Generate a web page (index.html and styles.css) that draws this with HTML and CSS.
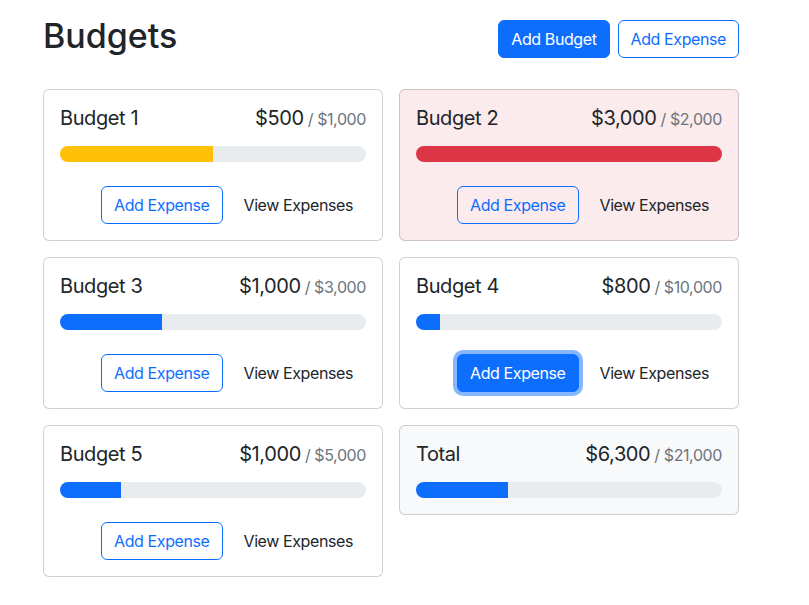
FILE: index.html
```html
<!DOCTYPE html>
<html lang="en">
<head>
<meta charset="utf-8">
<title>Budgets</title>
<link rel="stylesheet" href="styles.css">
</head>
<body>
<div class="page">
  <header class="header">
    <h1 class="title">Budgets</h1>
    <div class="actions">
      <button class="btn btn-primary">Add Budget</button>
      <button class="btn btn-outline">Add Expense</button>
    </div>
  </header>

  <div class="grid">
    <div class="card">
      <div class="card-head">
        <span class="name">Budget 1</span>
        <span class="amount">$500<span class="max">/ $1,000</span></span>
      </div>
      <div class="progress"><div class="bar bar-warning" style="width:50%"></div></div>
      <div class="card-actions">
        <button class="btn btn-outline">Add Expense</button>
        <button class="btn btn-plain">View Expenses</button>
      </div>
    </div>

    <div class="card card-danger">
      <div class="card-head">
        <span class="name">Budget 2</span>
        <span class="amount">$3,000<span class="max">/ $2,000</span></span>
      </div>
      <div class="progress"><div class="bar bar-danger" style="width:100%"></div></div>
      <div class="card-actions">
        <button class="btn btn-outline">Add Expense</button>
        <button class="btn btn-plain">View Expenses</button>
      </div>
    </div>

    <div class="card">
      <div class="card-head">
        <span class="name">Budget 3</span>
        <span class="amount">$1,000<span class="max">/ $3,000</span></span>
      </div>
      <div class="progress"><div class="bar" style="width:33.33%"></div></div>
      <div class="card-actions">
        <button class="btn btn-outline">Add Expense</button>
        <button class="btn btn-plain">View Expenses</button>
      </div>
    </div>

    <div class="card">
      <div class="card-head">
        <span class="name">Budget 4</span>
        <span class="amount">$800<span class="max">/ $10,000</span></span>
      </div>
      <div class="progress"><div class="bar" style="width:8%"></div></div>
      <div class="card-actions">
        <button class="btn btn-outline is-focused">Add Expense</button>
        <button class="btn btn-plain">View Expenses</button>
      </div>
    </div>

    <div class="card">
      <div class="card-head">
        <span class="name">Budget 5</span>
        <span class="amount">$1,000<span class="max">/ $5,000</span></span>
      </div>
      <div class="progress"><div class="bar" style="width:20%"></div></div>
      <div class="card-actions">
        <button class="btn btn-outline">Add Expense</button>
        <button class="btn btn-plain">View Expenses</button>
      </div>
    </div>

    <div class="card card-light">
      <div class="card-head">
        <span class="name">Total</span>
        <span class="amount">$6,300<span class="max">/ $21,000</span></span>
      </div>
      <div class="progress"><div class="bar" style="width:30%"></div></div>
    </div>
  </div>
</div>
</body>
</html>
```

FILE: styles.css
```css
* { box-sizing: border-box; }

body {
  margin: 0;
  background: #fff;
  color: #212529;
  font-family: Inter, "Noto Sans", "Liberation Sans", sans-serif;
  font-size: 16px;
  line-height: 1.5;
  letter-spacing: -0.025em;
}

.page {
  width: 696px;
  margin-left: 43px;
  padding-top: 16px;
}

.header {
  display: flex;
  justify-content: space-between;
  align-items: center;
  margin-bottom: 24px;
}

.title {
  margin: 0 0 8px;
  font-size: 34px;
  font-weight: 500;
  line-height: 1.2;
  letter-spacing: 0;
}

.actions {
  display: flex;
  gap: 8px;
  margin-top: -2px;
}

.btn {
  font-family: inherit;
  font-size: 16px;
  line-height: 24px;
  letter-spacing: inherit;
  padding: 6px 12px;
  border: 1px solid transparent;
  border-radius: 6px;
  background: transparent;
  color: #212529;
  cursor: pointer;
}

.btn-primary {
  background: #0d6efd;
  border-color: #0d6efd;
  color: #fff;
}

.btn-outline {
  border-color: #0d6efd;
  color: #0d6efd;
}

.btn-outline.is-focused {
  background: #0d6efd;
  color: #fff;
  box-shadow: 0 0 0 4px rgba(13, 110, 253, 0.5);
}

.grid {
  display: grid;
  grid-template-columns: 1fr 1fr;
  gap: 16px;
  align-items: start;
}

.card {
  border: 1px solid rgba(0, 0, 0, 0.175);
  border-radius: 6px;
  padding: 16px;
  background: #fff;
}

.card-danger { background: #fbebec; }
.card-light { background: #f8f9fa; }

.card-head {
  display: flex;
  justify-content: space-between;
  align-items: baseline;
  margin-bottom: 16px;
  height: 24px;
  line-height: 24px;
}

.name {
  font-size: 20px;
  font-weight: 400;
}

.amount {
  font-size: 20px;
}

.max {
  font-size: 16px;
  color: #6c757d;
  margin-left: 4px;
}

.progress {
  height: 16px;
  border-radius: 8px;
  background: #e9ecef;
  overflow: hidden;
  display: flex;
}

.bar { background: #0d6efd; height: 100%; }
.bar-warning { background: #ffc107; }
.bar-danger { background: #dc3545; }

.card-actions {
  display: flex;
  justify-content: flex-end;
  gap: 8px;
  margin-top: 24px;
}
```
